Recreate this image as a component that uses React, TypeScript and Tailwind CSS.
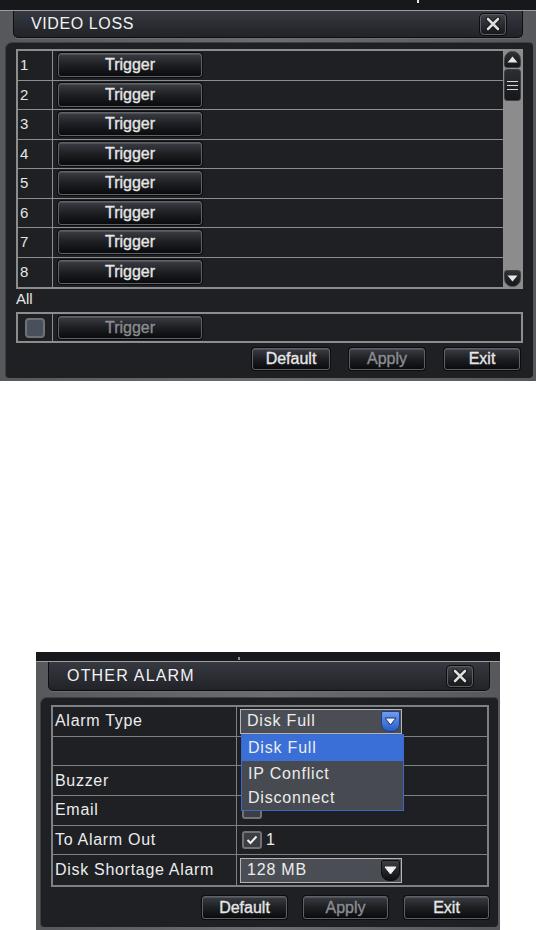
import type { ReactNode } from "react";
import clsx from "clsx";

function DvrButton({
  children,
  className,
  muted = false,
}: {
  children: ReactNode;
  className?: string;
  muted?: boolean;
}) {
  return (
    <div
      className={clsx(
        "flex items-center justify-center rounded-[3px] border border-[#5e6167] bg-linear-to-b from-[#3a3d43] via-[#1d1f23] to-[#0a0b0d] text-[16px] leading-none [-webkit-text-stroke:0.35px] shadow-[0_0_0_1px_#0b0c0e,inset_0_1px_0_rgba(255,255,255,0.12)]",
        muted ? "text-[#8b8d91]" : "text-[#e6e6e6]",
        className
      )}
    >
      {children}
    </div>
  );
}

function CloseButton({ className }: { className?: string }) {
  return (
    <div
      className={clsx(
        "flex h-[21px] w-[26px] items-center justify-center rounded-[4px] border border-[#5c5f65] bg-linear-to-b from-[#3d4046] to-[#17191c] shadow-[0_0_0_1px_#0b0c0e]",
        className
      )}
    >
      <svg width="16" height="14" viewBox="0 0 16 14">
        <path d="M3 2 L13 12 M13 2 L3 12" stroke="#0c0c0c" strokeWidth="4.5" strokeLinecap="round" />
        <path d="M3 2 L13 12 M13 2 L3 12" stroke="#dcdcdc" strokeWidth="2.6" strokeLinecap="round" />
      </svg>
    </div>
  );
}

function TitleBar({
  title,
  className,
  textClass,
}: {
  title: string;
  className?: string;
  textClass?: string;
}) {
  return (
    <div
      className={clsx(
        "flex items-center justify-between rounded-b-[5px] border-x border-b border-[#0d0e10] bg-linear-to-b from-[#363940] to-[#212328] shadow-[0_1px_0_#6a6c70]",
        className
      )}
    >
      <span className={clsx("text-[16px] text-[#f2f2f2]", textClass)}>{title}</span>
      <CloseButton className="mr-[16px]" />
    </div>
  );
}

function ScrollArrow({ dir }: { dir: "up" | "down" }) {
  return (
    <div
      className={clsx(
        "mx-auto flex h-[17px] w-[17px] items-center justify-center border border-[#3c3f44] bg-linear-to-b from-[#2e3136] to-[#15171a]",
        dir === "up" ? "rounded-t-[9px] rounded-b-[3px]" : "rounded-b-[9px] rounded-t-[3px]"
      )}
    >
      <svg width="11" height="7" viewBox="0 0 11 7">
        {dir === "up" ? (
          <path d="M5.5 0.5 L10.5 6.5 L0.5 6.5 Z" fill="#e8e8e8" />
        ) : (
          <path d="M0.5 0.5 L10.5 0.5 L5.5 6.5 Z" fill="#e8e8e8" />
        )}
      </svg>
    </div>
  );
}

function VideoLoss() {
  const rows = [1, 2, 3, 4, 5, 6, 7, 8];
  return (
    <div className="flex h-[381px] w-[536px] flex-col bg-linear-to-r from-[#56585b] via-[#6b6d70] to-[#56585b]">
      <div className="relative h-[10px] bg-[#17181b]">
        <span className="absolute left-[417px] top-0 h-[3px] w-[2px] bg-[#e8e8e8]" />
      </div>
      <div className="h-px bg-[#9c9ea2]" />
      <TitleBar
        title="VIDEO LOSS"
        className="mx-[13px] h-[27px] pl-[17px]"
        textClass="tracking-[0.6px]"
      />
      <div className="mt-[4px] ml-[5px] mr-[3px] flex h-[336px] flex-col rounded-tl-[7px] rounded-tr-[4px] rounded-b-[4px] border-l border-t border-[#3d4045] bg-[#1e2024] pl-[10px] pr-[10px] pt-[6px]">
        <div className="flex h-[240px] border-2 border-[#8d8d8d]">
          <div className="grid flex-1 grid-rows-8">
            {rows.map((n) => (
              <div
                key={n}
                className={clsx("flex items-stretch", n < 8 && "border-b border-[#8d8d8d]")}
              >
                <div className="flex w-[35px] items-center border-r border-[#8d8d8d] pl-[2px] text-[15px] text-[#e6e6e6]">
                  {n}
                </div>
                <div className="flex items-center pl-[5px]">
                  <DvrButton className="h-[24px] w-[144px]">Trigger</DvrButton>
                </div>
              </div>
            ))}
          </div>
          <div className="flex w-[18px] flex-col bg-[#8c8c8c] pl-[1px]">
            <ScrollArrow dir="up" />
            <div className="mx-auto mt-[1px] flex h-[32px] w-[17px] flex-col items-center justify-center gap-[3px] rounded-[3px] border border-[#3c3f44] bg-linear-to-b from-[#2b2e33] to-[#15171a]">
              <span className="h-px w-[11px] bg-[#d8d8d8]" />
              <span className="h-px w-[11px] bg-[#d8d8d8]" />
              <span className="h-px w-[11px] bg-[#d8d8d8]" />
            </div>
            <div className="flex-1" />
            <ScrollArrow dir="down" />
          </div>
        </div>
        <div className="flex h-[23px] items-end pb-[2px] text-[15px] text-[#e6e6e6]">All</div>
        <div className="flex h-[31px] border-2 border-[#8d8d8d]">
          <div className="flex w-[35px] items-center justify-center border-r border-[#8d8d8d]">
            <div className="h-[20px] w-[20px] rounded-[4px] border-2 border-[#6f7175] bg-[#48505c]" />
          </div>
          <div className="flex items-center pl-[5px]">
            <DvrButton muted className="h-[23px] w-[144px]">
              Trigger
            </DvrButton>
          </div>
        </div>
        <div className="mt-[5px] flex justify-end gap-[19px] pr-[3px]">
          <DvrButton className="h-[22px] w-[78px]">Default</DvrButton>
          <DvrButton muted className="h-[22px] w-[76px]">
            Apply
          </DvrButton>
          <DvrButton className="h-[22px] w-[76px]">Exit</DvrButton>
        </div>
      </div>
    </div>
  );
}

function SelectBox({
  value,
  blue = false,
}: {
  value: string;
  blue?: boolean;
}) {
  return (
    <div className="flex h-[25px] w-[162px] items-center justify-between border border-[#b4b4b4] bg-[#4a4e54] pl-[6px] pr-[1px] text-[16px] tracking-[0.8px] text-[#ececec]">
      <span>{value}</span>
      <div
        className={clsx(
          "flex h-[21px] w-[19px] items-center justify-center rounded-b-[8px] rounded-t-[2px] border",
          blue
            ? "border-[#1c3f86] bg-linear-to-b from-[#6d9cf0] to-[#2a5cc4]"
            : "border-[#0c0d0f] bg-linear-to-b from-[#3b3e44] to-[#0f1013]"
        )}
      >
        <svg width="13" height="9" viewBox="0 0 13 9">
          <path
            d="M1 1 L12 1 L6.5 8 Z"
            fill={blue ? "#e9f0ff" : "#f0f0f0"}
            stroke={blue ? "#16336e" : "#f0f0f0"}
            strokeWidth="1"
            strokeLinejoin="round"
          />
        </svg>
      </div>
    </div>
  );
}

function OtherAlarm() {
  const labels = ["Alarm Type", "", "Buzzer", "Email", "To Alarm Out", "Disk Shortage Alarm"];
  return (
    <div className="ml-[36px] flex h-[278px] w-[464px] flex-col bg-linear-to-r from-[#56585b] via-[#6b6d70] to-[#56585b]">
      <div className="relative h-[9px] bg-[#17181b]">
        <span className="absolute left-[202px] top-[5px] h-[3px] w-[2px] bg-[#8a8a8a]" />
      </div>
      <div className="h-px bg-[#9c9ea2]" />
      <TitleBar
        title="OTHER ALARM"
        className="ml-[12px] mr-[10px] h-[29px] pl-[18px]"
        textClass="tracking-[1.2px]"
      />
      <div className="relative mt-[6px] ml-[4px] mr-[2px] flex h-[230px] flex-col rounded-tl-[7px] rounded-tr-[4px] rounded-b-[4px] border-l border-t border-[#3d4045] bg-[#1e2024] pl-[10px] pr-[9px] pt-[7px]">
        <div className="grid h-[182px] grid-rows-6 border-2 border-[#7f8084]">
          {labels.map((label, i) => (
            <div
              key={i}
              className={clsx("flex items-stretch", i < 5 && "border-b border-[#7f8084]")}
            >
              <div className="flex w-[184px] items-center border-r border-[#7f8084] pl-[2px] text-[16px] tracking-[0.7px] text-[#ececec]">
                {label}
              </div>
              <div className="flex items-center pl-[3px]">
                {i === 0 && <SelectBox value="Disk Full" blue />}
                {i === 3 && (
                  <div className="ml-[2px] h-[18px] w-[20px] rounded-[3px] border-2 border-[#707276] bg-[#3b3e43]" />
                )}
                {i === 4 && (
                  <div className="flex items-center gap-[4px] pl-[2px] text-[16px] text-[#ececec]">
                    <div className="flex h-[18px] w-[20px] items-center justify-center rounded-[3px] border-2 border-[#707276] bg-[#3b3e43]">
                      <svg width="12" height="10" viewBox="0 0 12 10">
                        <path d="M1.5 5 L4.5 8 L10.5 1.5" stroke="#f2f2f2" strokeWidth="2" fill="none" />
                      </svg>
                    </div>
                    1
                  </div>
                )}
                {i === 5 && <SelectBox value="128 MB" />}
              </div>
            </div>
          ))}
        </div>
        <div className="absolute left-[200px] top-[36px] flex w-[163px] flex-col border border-[#3b69c6] bg-[#474b51] text-[16px] tracking-[0.8px] text-[#ececec]">
          <div className="flex h-[26px] items-center bg-[#3b6fd8] pl-[6px]">Disk Full</div>
          <div className="flex h-[25px] items-center pl-[6px]">IP Conflict</div>
          <div className="flex h-[24px] items-center pl-[6px]">Disconnect</div>
        </div>
        <div className="mt-[9px] flex justify-end gap-[16px]">
          <DvrButton className="h-[23px] w-[85px]">Default</DvrButton>
          <DvrButton muted className="h-[23px] w-[85px]">
            Apply
          </DvrButton>
          <DvrButton className="h-[23px] w-[85px]">Exit</DvrButton>
        </div>
      </div>
    </div>
  );
}

export default function App() {
  return (
    <div className="flex h-[930px] w-[536px] flex-col overflow-hidden bg-white font-['Liberation_Sans',Arial,sans-serif]">
      <VideoLoss />
      <div className="h-[271px]" />
      <OtherAlarm />
    </div>
  );
}
